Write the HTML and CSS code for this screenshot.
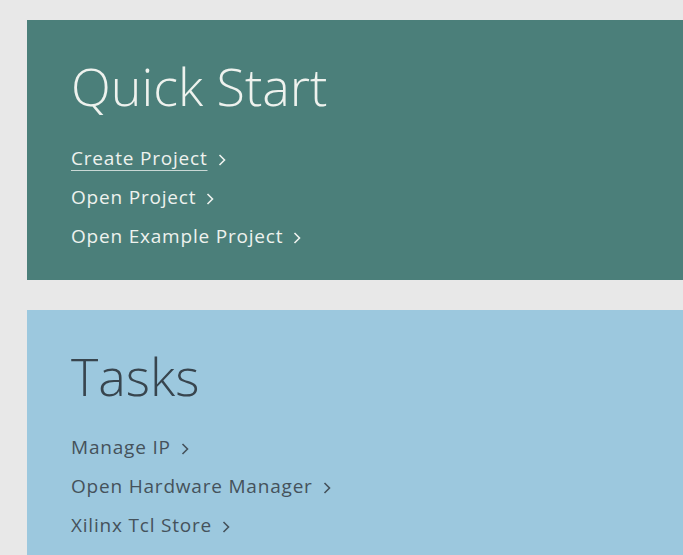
FILE: index.html
```html
<!DOCTYPE html>
<html>
<head>
<meta charset="utf-8">
<link rel="stylesheet" href="styles.css">
</head>
<body>
<div class="page">
  <section class="panel panel-quick">
    <h1 class="panel-title">Quick Start</h1>
    <ul class="links">
      <li><a class="link link-active">Create Project</a><svg class="chev" viewBox="0 0 8 12"><path d="M1.5 1 L6.5 6 L1.5 11"/></svg></li>
      <li><a class="link">Open Project</a><svg class="chev" viewBox="0 0 8 12"><path d="M1.5 1 L6.5 6 L1.5 11"/></svg></li>
      <li><a class="link">Open Example Project</a><svg class="chev" viewBox="0 0 8 12"><path d="M1.5 1 L6.5 6 L1.5 11"/></svg></li>
    </ul>
  </section>
  <section class="panel panel-tasks">
    <h1 class="panel-title">Tasks</h1>
    <ul class="links">
      <li><a class="link">Manage IP</a><svg class="chev" viewBox="0 0 8 12"><path d="M1.5 1 L6.5 6 L1.5 11"/></svg></li>
      <li><a class="link">Open Hardware Manager</a><svg class="chev" viewBox="0 0 8 12"><path d="M1.5 1 L6.5 6 L1.5 11"/></svg></li>
      <li><a class="link">Xilinx Tcl Store</a><svg class="chev" viewBox="0 0 8 12"><path d="M1.5 1 L6.5 6 L1.5 11"/></svg></li>
    </ul>
  </section>
</div>
</body>
</html>
```

FILE: styles.css
```css
html, body {
  margin: 0;
  padding: 0;
  background: #e8e8e8;
  overflow: hidden;
}
.page {
  display: flex;
  flex-direction: column;
  gap: 30px;
  padding: 20px 0 0 27px;
  height: 555px;
  box-sizing: border-box;
  font-family: "Open Sans", "Noto Sans", sans-serif;
}
.panel {
  padding: 40px 0 0 44px;
  box-sizing: border-box;
}
.panel-quick {
  background: #4b7f7a;
  color: #eef2ee;
  height: 260px;
}
.panel-tasks {
  background: #9cc8de;
  color: #38454e;
  flex: 1;
}
.panel-title {
  margin: 0 0 27px 0;
  font-size: 52px;
  font-weight: 300;
  line-height: 52px;
}
.panel-tasks .panel-title {
  margin-bottom: 26px;
}
.links {
  list-style: none;
  margin: 0;
  padding: 0;
}
.links li {
  display: flex;
  align-items: center;
  height: 39px;
  font-size: 19px;
  letter-spacing: 0.8px;
}
.link {
  line-height: 39px;
}
.link-active {
  text-decoration: underline;
  text-decoration-color: #c9d8d5;
  text-underline-offset: 5px;
  text-decoration-thickness: 1px;
}
.chev {
  width: 8px;
  height: 12px;
  margin-left: 10px;
  margin-top: 2px;
  fill: none;
  stroke: currentColor;
  stroke-width: 1.6;
}
.panel-tasks .link { color: #45525b; }
.panel-tasks .chev { stroke: #45525b; }
```
